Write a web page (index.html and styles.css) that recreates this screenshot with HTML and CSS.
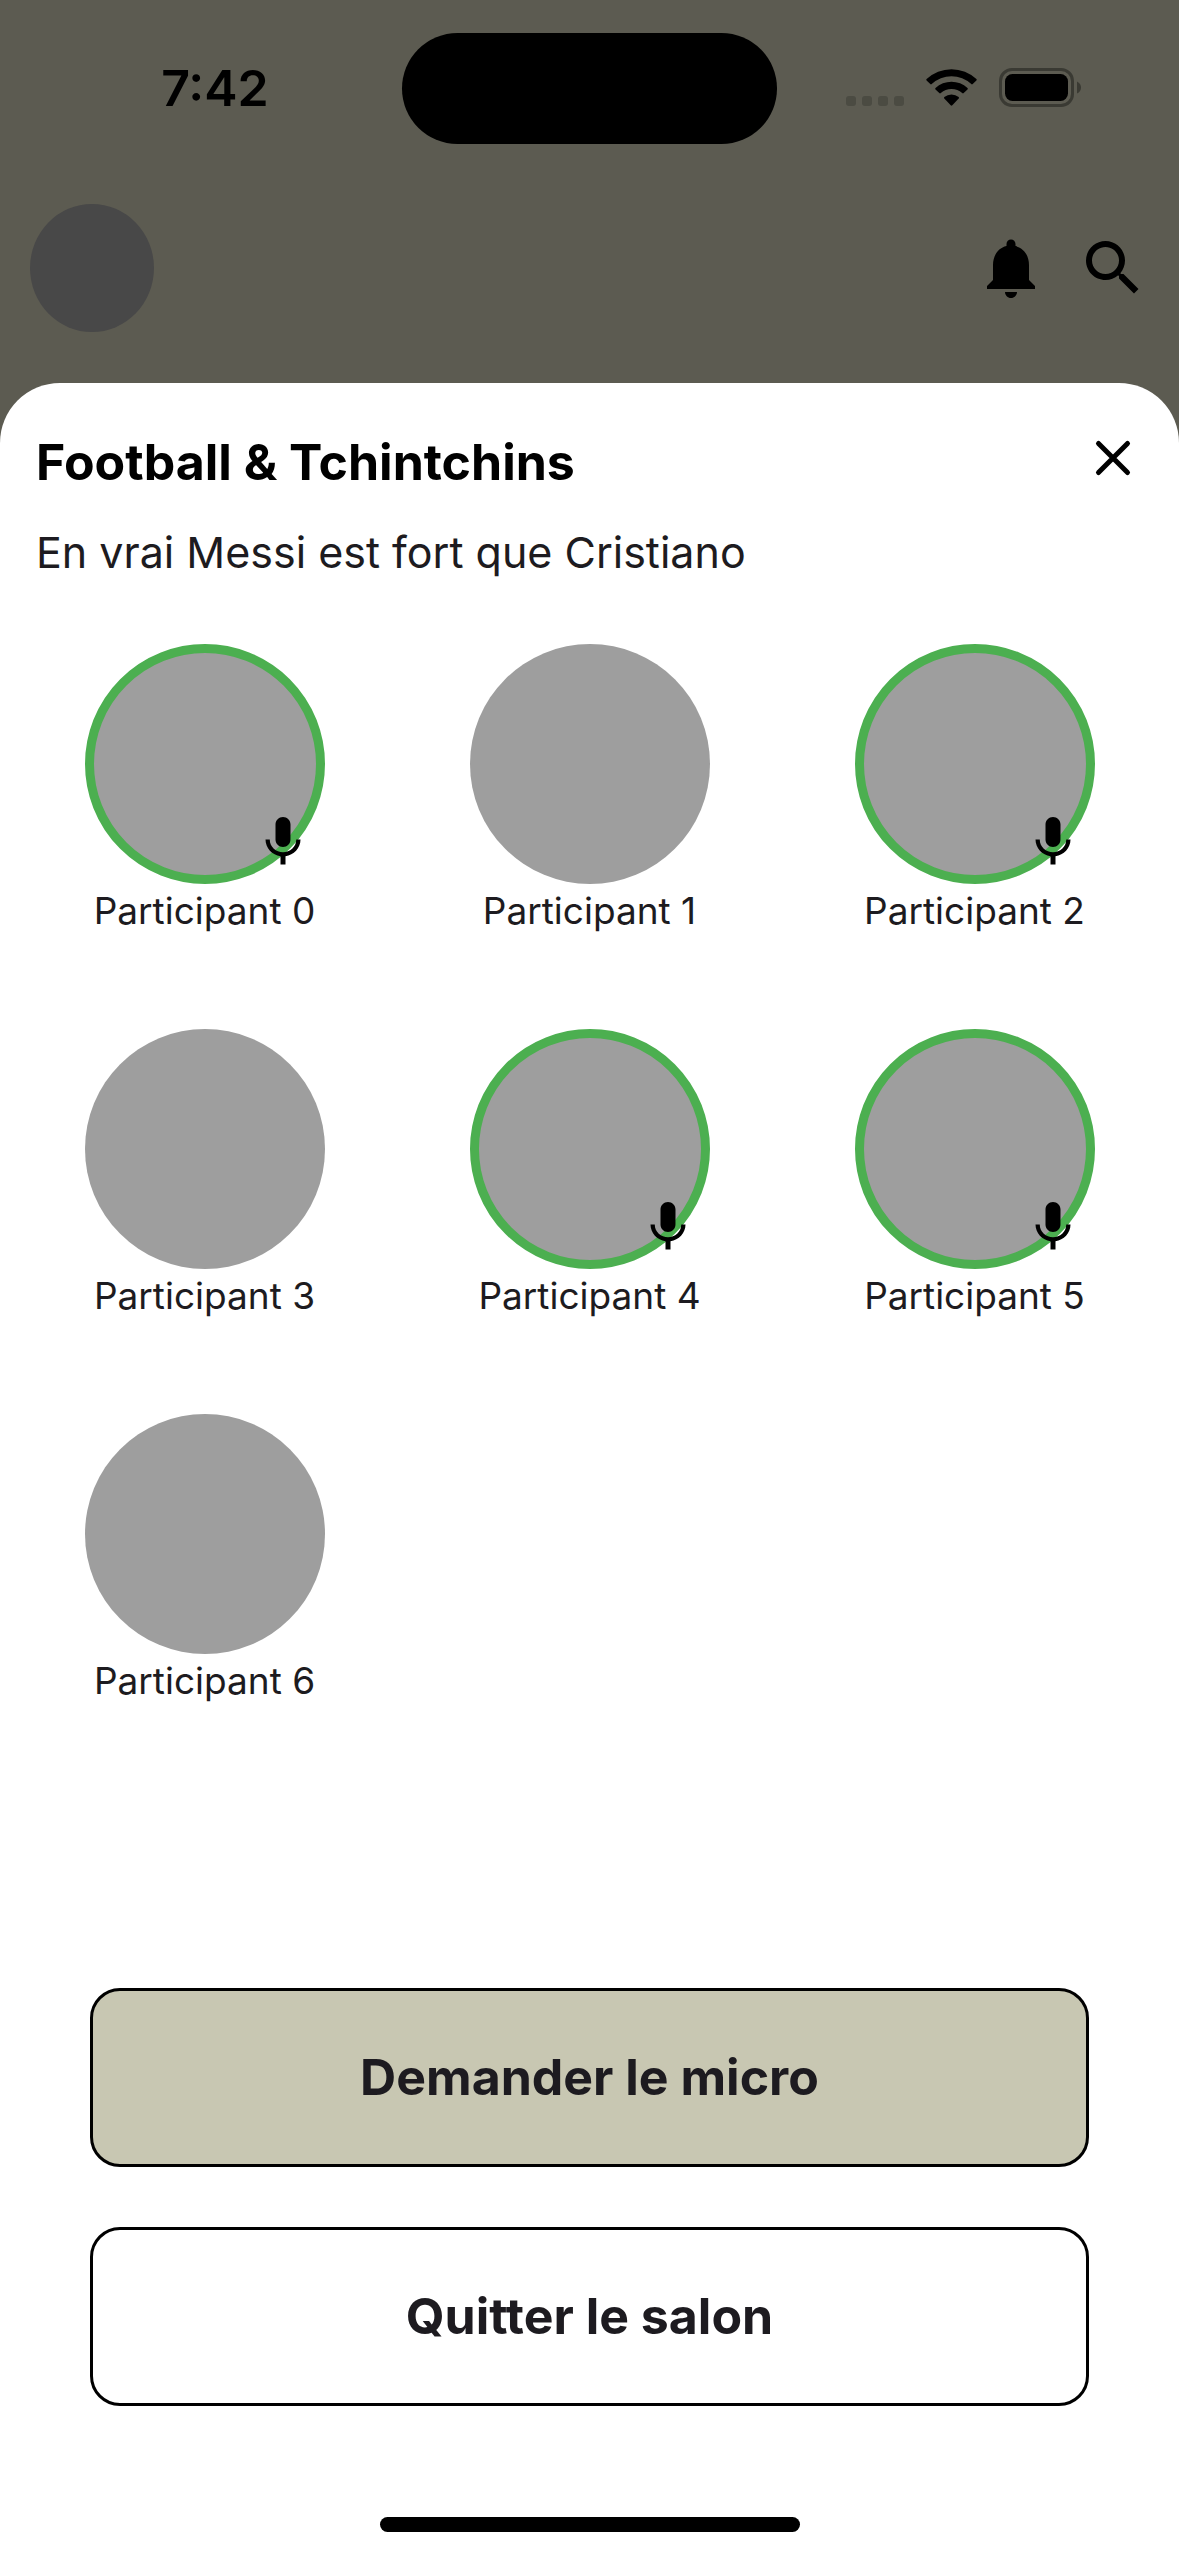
FILE: index.html
```html
<!DOCTYPE html>
<html lang="fr">
<head>
  <meta charset="utf-8">
  <meta name="viewport" content="width=device-width, initial-scale=1">
  <title>Football &amp; Tchintchins</title>
  <link rel="stylesheet" href="styles.css">
</head>
<body>
  <svg class="sprite" aria-hidden="true">
    <symbol id="mic" viewBox="0 0 24 24">
      <path d="M12 14c1.66 0 2.99-1.34 2.99-3L15 5c0-1.66-1.34-3-3-3S9 3.34 9 5v6c0 1.66 1.34 3 3 3zm5.3-3c0 3-2.54 5.1-5.3 5.1S6.7 14 6.7 11H5c0 3.41 2.72 6.23 6 6.72V21h2v-3.28c3.28-.48 6-3.3 6-6.72h-1.7z"/>
    </symbol>
  </svg>

  <div class="screen">
    <div class="status-bar">
      <time class="clock">7:42</time>
      <div class="island"></div>
      <div class="indicators">
        <svg class="signal" viewBox="0 0 58 11" aria-hidden="true">
          <rect width="10" height="10" rx="3"/>
          <rect x="16" width="10" height="10" rx="3"/>
          <rect x="32" width="10" height="10" rx="3"/>
          <rect x="48" width="10" height="10" rx="3"/>
        </svg>
        <svg class="wifi" viewBox="0 0 51 38" aria-hidden="true">
          <path d="M0.6 10.1A36.2 36.2 0 0 1 50.4 10.1Q51 10.8 50.4 11.4L46.7 15.1Q46 15.7 45.3 15.1A29 29 0 0 0 5.7 15.1Q5 15.7 4.3 15.1L0.6 11.4Q0 10.8 0.6 10.1Z"/>
          <path d="M9.5 19A23.6 23.6 0 0 1 41.5 19Q42.2 19.7 41.5 20.4L37.7 24.1Q37 24.8 36.2 24.1A16 16 0 0 0 14.8 24.1Q14 24.8 13.3 24.1L9.5 20.4Q8.8 19.7 9.5 19Z"/>
          <path d="M18.3 28A11.3 11.3 0 0 1 32.7 28Q33.3 28.7 32.7 29.4L26.3 36.3Q25.5 37.1 24.7 36.3L18.3 29.4Q17.7 28.7 18.3 28Z"/>
        </svg>
        <svg class="battery" viewBox="0 0 82 39" aria-hidden="true">
          <rect class="battery-shell" x="1.5" y="1.5" width="72" height="36" rx="11.5"/>
          <rect x="6" y="6" width="63" height="27" rx="7.5"/>
          <path class="battery-tip" d="M78 13.5Q82 15.5 82 19.5T78 25.5Z"/>
        </svg>
      </div>
    </div>

    <header class="app-bar">
      <div class="profile"></div>
      <nav class="app-actions">
        <button class="icon-button" type="button" aria-label="Notifications">
          <svg class="icon" viewBox="0 0 24 24"><path d="M12 22c1.1 0 2-.9 2-2h-4c0 1.1.89 2 2 2zm6-6v-5c0-3.07-1.64-5.64-4.5-6.32V4c0-.83-.67-1.5-1.5-1.5s-1.5.67-1.5 1.5v.68C7.63 5.36 6 7.92 6 11v5l-2 2v1h16v-1l-2-2z"/></svg>
        </button>
        <button class="icon-button" type="button" aria-label="Rechercher">
          <svg class="icon" viewBox="0 0 24 24"><path d="M15.5 14h-.79l-.28-.27C15.41 12.59 16 11.11 16 9.5 16 5.91 13.09 3 9.5 3S3 5.91 3 9.5 5.91 16 9.5 16c1.61 0 3.09-.59 4.23-1.57l.27.28v.79l5 4.99L20.49 19l-4.99-5zm-6 0C7.01 14 5 11.99 5 9.5S7.01 5 9.5 5 14 7.01 14 9.5 11.99 14 9.5 14z"/></svg>
        </button>
      </nav>
    </header>

    <main class="sheet">
      <div class="sheet-header">
        <h1 class="title">Football &amp; Tchintchins</h1>
        <button class="icon-button" type="button" aria-label="Fermer">
          <svg class="close-icon" viewBox="0 0 60 60"><path d="M15.5 15.5L44.5 44.5M44.5 15.5L15.5 44.5"/></svg>
        </button>
      </div>
      <p class="topic">En vrai Messi est fort que Cristiano</p>

      <ul class="participants">
        <li class="participant">
          <div class="avatar speaking"><svg class="mic"><use href="#mic"/></svg></div>
          <span class="name">Participant 0</span>
        </li>
        <li class="participant">
          <div class="avatar"></div>
          <span class="name">Participant 1</span>
        </li>
        <li class="participant">
          <div class="avatar speaking"><svg class="mic"><use href="#mic"/></svg></div>
          <span class="name">Participant 2</span>
        </li>
        <li class="participant">
          <div class="avatar"></div>
          <span class="name">Participant 3</span>
        </li>
        <li class="participant">
          <div class="avatar speaking"><svg class="mic"><use href="#mic"/></svg></div>
          <span class="name">Participant 4</span>
        </li>
        <li class="participant">
          <div class="avatar speaking"><svg class="mic"><use href="#mic"/></svg></div>
          <span class="name">Participant 5</span>
        </li>
        <li class="participant">
          <div class="avatar"></div>
          <span class="name">Participant 6</span>
        </li>
      </ul>

      <div class="actions">
        <button class="action primary" type="button">Demander le micro</button>
        <button class="action" type="button">Quitter le salon</button>
      </div>
      <div class="home-indicator"></div>
    </main>
  </div>
</body>
</html>
```
FILE: styles.css
```css
* {
  box-sizing: border-box;
}

body {
  margin: 0;
  font-family: Inter, "Liberation Sans", sans-serif;
  color: #1d1b20;
  background: #5c5b51;
}

button {
  font: inherit;
  color: inherit;
  cursor: pointer;
}

.sprite {
  display: none;
}

.screen {
  display: flex;
  flex-direction: column;
  min-height: 100vh;
}

/* Status bar */
.status-bar {
  display: grid;
  grid-template-columns: 1fr 375px 1fr;
  align-items: center;
  height: 177px;
  color: #000;
}

.clock {
  padding: 0 0 2px 28px;
  font-size: 50px;
  font-weight: 600;
  line-height: 60px;
  text-align: center;
}

.island {
  height: 111px;
  border-radius: 56px;
  background: #000;
}

.indicators {
  display: flex;
  justify-content: center;
  align-items: flex-end;
  gap: 22px;
  padding: 0 30px 2px 0;
}

.signal {
  width: 58px;
  height: 11px;
  fill: #4b4b42;
}

.wifi {
  width: 51px;
  height: 38px;
}

.battery {
  width: 82px;
  height: 39px;
}

.battery-shell {
  fill: none;
  stroke: #3a3a33;
  stroke-width: 3;
}

.battery-tip {
  fill: #3a3a33;
}

/* App bar behind the sheet */
.app-bar {
  display: flex;
  justify-content: space-between;
  align-items: center;
  padding: 27px 30px 51px;
}

.profile {
  width: 124px;
  height: 128px;
  border-radius: 50%;
  background: #484848;
}

.app-actions {
  display: flex;
  gap: 30px;
}

.icon-button {
  display: flex;
  padding: 0;
  border: 0;
  background: none;
}

.icon {
  width: 72px;
  height: 72px;
}

/* Sheet */
.sheet {
  display: flex;
  flex: 1;
  flex-direction: column;
  padding: 45px 0 24px;
  border-radius: 60px 60px 0 0;
  background: #fff;
}

.sheet-header {
  display: flex;
  justify-content: space-between;
  align-items: flex-start;
  padding: 0 36px;
}

.title {
  margin: 0;
  font-size: 50px;
  font-weight: 700;
  line-height: 68px;
  color: #000;
}

.close-icon {
  width: 60px;
  height: 60px;
  fill: none;
  stroke: #000;
  stroke-width: 5;
  stroke-linecap: round;
}

.topic {
  margin: 26px 36px 62px;
  font-size: 43px;
  line-height: 60px;
}

.participants {
  display: grid;
  grid-template-columns: repeat(3, 1fr);
  grid-auto-rows: 385px;
  margin: 0;
  padding: 0 12px;
  list-style: none;
}

.participant {
  display: flex;
  flex-direction: column;
  align-items: center;
}

.avatar {
  position: relative;
  width: 240px;
  height: 240px;
  border-radius: 50%;
  background: #9e9e9e;
}

.speaking {
  border: 9px solid #4caf50;
}

.mic {
  position: absolute;
  right: 3px;
  bottom: 3px;
  width: 60px;
  height: 60px;
}

.name {
  font-size: 37px;
  line-height: 54px;
}

.actions {
  display: flex;
  flex-direction: column;
  gap: 60px;
  margin: auto 90px 111px;
}

.action {
  height: 179px;
  padding: 0 0 2px;
  border: 3px solid #000;
  border-radius: 30px;
  background: #fff;
  font-size: 50px;
  font-weight: 700;
}

.primary {
  background: #c8c7b2;
}

.home-indicator {
  align-self: center;
  width: 420px;
  height: 15px;
  border-radius: 8px;
  background: #000;
}
```
